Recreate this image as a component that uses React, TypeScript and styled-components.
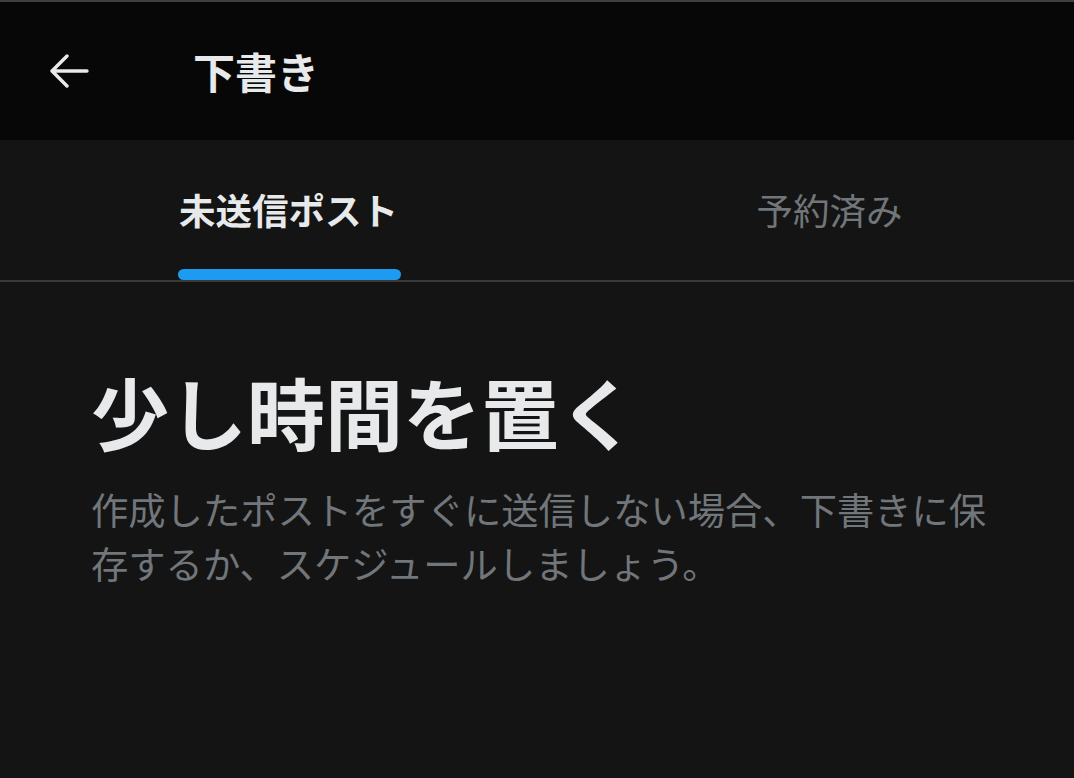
import styled, { createGlobalStyle } from 'styled-components';

const GlobalStyle = createGlobalStyle`
  html, body {
    margin: 0;
    padding: 0;
    background: #141414;
  }
  body {
    font-family: 'Noto Sans CJK JP', 'Noto Sans', sans-serif;
  }
`;

const tabs = [
  { label: '未送信ポスト', active: true },
  { label: '予約済み', active: false },
];

const App = () => {
  return (
    <Page>
      <GlobalStyle />
      <TopBar>
        <BackButton aria-label='戻る'>
          <svg width='40' height='34' viewBox='0 0 40 34' fill='none'>
            <path
              d='M38 17H4M18 2L3 17l15 15'
              stroke='#e7e9ea'
              strokeWidth='3.4'
              strokeLinecap='round'
              strokeLinejoin='round'
            />
          </svg>
        </BackButton>
        <Title>下書き</Title>
      </TopBar>
      <TabBar>
        {tabs.map((tab) => (
          <Tab key={tab.label}>
            <TabLabel $active={tab.active}>
              {tab.label}
              {tab.active && <Indicator />}
            </TabLabel>
          </Tab>
        ))}
      </TabBar>
      <Content>
        <Heading>少し時間を置く</Heading>
        <Body>
          作成したポストをすぐに送信しない場合、下書きに保存するか、スケジュールしましょう。
        </Body>
      </Content>
    </Page>
  );
};

export default App;

const Page = styled.div`
  width: 1074px;
  min-height: 778px;
  background: #141414;
  border-top: 2px solid #3c3f44;
  box-sizing: border-box;
  overflow: hidden;
`;

const TopBar = styled.header`
  display: flex;
  align-items: center;
  height: 138px;
  padding-left: 49px;
  background: #070708;
`;

const BackButton = styled.button`
  display: flex;
  align-items: center;
  justify-content: center;
  padding: 0;
  margin: 0 104px 0 0;
  background: none;
  border: none;
  cursor: pointer;
`;

const Title = styled.h1`
  margin: 0;
  font-size: 42px;
  line-height: 1;
  font-weight: 700;
  color: #e7e9ea;
`;

const TabBar = styled.nav`
  display: flex;
  height: 140px;
  padding-left: 18px;
  border-bottom: 2px solid #38393b;
`;

const Tab = styled.div`
  flex: 0 0 541px;
  display: flex;
  justify-content: center;
  align-items: stretch;
`;

const TabLabel = styled.div<{ $active: boolean }>`
  position: relative;
  display: flex;
  align-items: center;
  font-size: 36.5px;
  font-weight: ${({ $active }) => ($active ? 700 : 400)};
  color: ${({ $active }) => ($active ? '#e7e9ea' : '#71767b')};
  padding-bottom: 2px;
`;

const Indicator = styled.span`
  position: absolute;
  left: -1px;
  right: -3px;
  bottom: 0;
  height: 11px;
  border-radius: 6px;
  background: #1d9bf0;
`;

const Content = styled.main`
  padding: 82px 80px 0 91px;
`;

const Heading = styled.h2`
  margin: 0;
  font-size: 78px;
  line-height: 94px;
  font-weight: 700;
  color: #e7e9ea;
`;

const Body = styled.p`
  margin: 24px 0 0;
  font-size: 37.3px;
  line-height: 54px;
  font-weight: 400;
  color: #71767b;
`;
